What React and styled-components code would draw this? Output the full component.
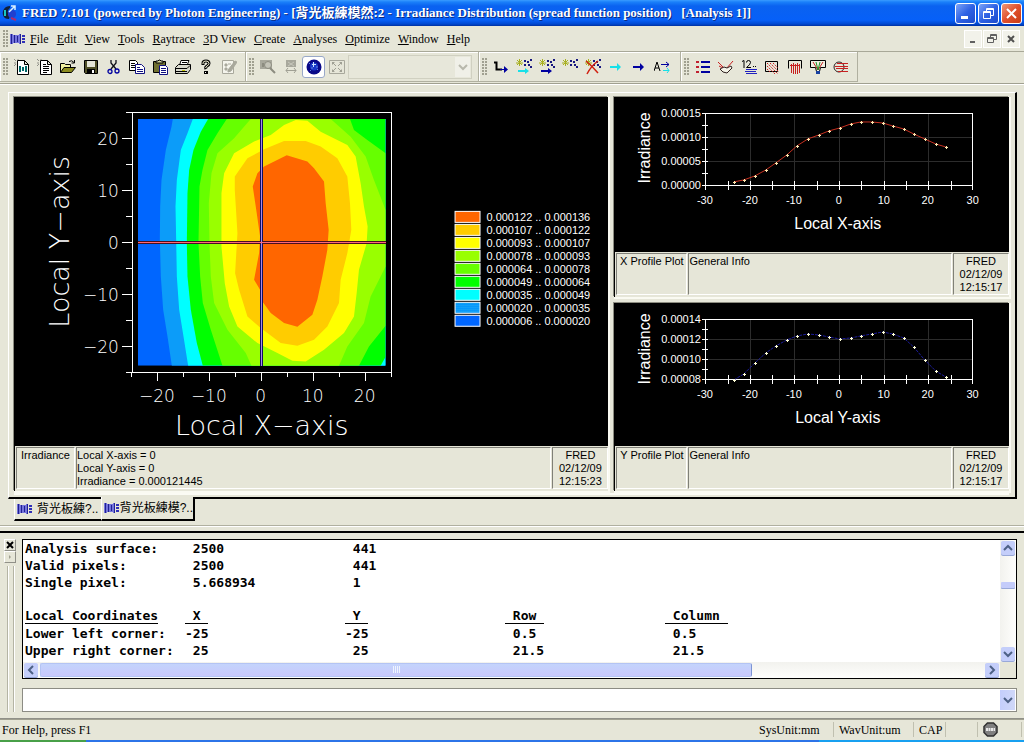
import React, { useState } from "react";
import styled, { createGlobalStyle, css } from "styled-components";

const GlobalStyle = createGlobalStyle`
  * {
    box-sizing: border-box;
  }
  body {
    margin: 0;
    background: #e6e6d8;
    color: #000;
    font: 12px/14px "Liberation Serif", "Noto Sans CJK TC", serif;
  }
  button, input, select {
    font: inherit;
    color: inherit;
  }
`;

const Window = styled.div`
  min-height: 100vh;
  display: flex;
  flex-direction: column;
`;

const TitleBar = styled.header`
  height: 26px;
  padding: 0 2px;
  display: flex;
  align-items: center;
  gap: 3px;
  color: #fff;
  background: linear-gradient(#3a9cff 0, #1a80fa 2px, #0a62f0 6px, #0660f8 20px, #0048d0 24px, #0030a0);
`;

const Title = styled.h1`
  flex: 1;
  margin: 0;
  font-size: 13px;
  line-height: 16px;
  font-weight: bold;
  white-space: pre;
  text-shadow: 1px 1px 0 #0a2a80;
`;

const WindowButtons = styled.div`
  display: flex;
  gap: 2px;
`;

const WindowButton = styled.button`
  width: 21px;
  height: 21px;
  padding: 0;
  border: 1px solid #fff;
  border-radius: 3px;
  display: grid;
  place-items: center;
  background: ${({ $close }) =>
    $close
      ? "linear-gradient(135deg, #f09878, #e0502c 50%, #c83c14)"
      : "linear-gradient(135deg, #7ca4f8, #2f62e4 50%, #1c4ccc)"};
`;

const MenuBar = styled.nav`
  height: 26px;
  display: flex;
  align-items: center;
  border-bottom: 1px solid #a8a898;
`;

const Grip = styled.span`
  width: 6px;
  height: 18px;
  margin: 0 1px 0 3px;
  background: radial-gradient(circle at 1px 1px, #a0a090 1px, transparent 1px) 0 0 / 3px 3px;
`;

const MenuItem = styled.button`
  padding: 0 4px;
  border: 0;
  background: none;
  line-height: 16px;
  white-space: nowrap;
  &:hover {
    background: #c1d2ee;
  }
`;

const ChildButtons = styled.div`
  display: flex;
  margin-left: auto;
  margin-right: 4px;
`;

const ChildButton = styled.button`
  width: 18px;
  height: 18px;
  margin-left: 1px;
  padding: 0;
  border: 1px solid #fff;
  background: #f2f2ea;
  display: grid;
  place-items: center;
`;

const ToolbarRow = styled.div`
  height: 32px;
  display: flex;
  border-bottom: 1px solid #a0a090;
  box-shadow: 0 1px 0 #fff;
`;

const Toolbar = styled.div`
  height: 30px;
  padding-right: ${({ $end }) => $end}px;
  display: flex;
  align-items: center;
  border: 1px solid #b0b0a0;
  border-width: 0 1px 1px 0;
  box-shadow: inset 1px 1px 0 #fff;
`;

const ToolButton = styled.button`
  width: 23px;
  height: 22px;
  padding: 0;
  border: 1px solid transparent;
  border-radius: 3px;
  background: none;
  display: grid;
  place-items: center;
  ${({ $active }) =>
    $active &&
    css`
      border-color: #98a8c8;
      background: #fff;
    `}
`;

const SelectWrap = styled.span`
  display: flex;
  position: relative;
`;

const Select = styled.select`
  width: ${({ $small }) => ($small ? "124px" : "100%")};
  height: 24px;
  padding: 0 4px;
  appearance: none;
  border: 1px solid ${({ $small }) => ($small ? "#c8c8b8" : "#8c8c84")};
  border-radius: 0;
  background: ${({ $small }) => ($small ? "#e8e8dc" : "#fff")};
  outline: 0;
`;

const SelectArrow = styled.span`
  position: absolute;
  top: 2px;
  right: 2px;
  width: 15px;
  height: 20px;
  display: grid;
  place-items: center;
  pointer-events: none;
  color: ${({ $small }) => ($small ? "#b8b8ac" : "#4d6185")};
  background: ${({ $small }) => ($small ? "#f0f0e8" : "linear-gradient(90deg, #c4cefc, #d0d8f8)")};
`;

const Workspace = styled.main`
  padding: 8px 7px 0 8px;
  border-bottom: 1px solid #b0b0a0;
  flex: none;
`;

const Splitter = styled.div`
  height: 7px;
  border-top: 1px solid #fff;
  border-bottom: 2px solid #000;
`;

const ViewFrame = styled.section`
  padding: 4px 6px 2px 5px;
  border: 2px solid;
  border-width: 1px 2px 2px 1px;
  border-color: #fff #000 #000 #fff;
`;

const Views = styled.div`
  display: grid;
  grid-template-columns: 595fr 395fr;
  gap: 6px;
  padding-bottom: 2px;
  border-bottom: 2px solid #fbfbf4;
`;

const ViewColumn = styled.div`
  display: flex;
  flex-direction: column;
  justify-content: space-between;
`;

const View = styled.article`
  border-left: 1px solid #000;
  background: #e6e6d8;
  box-shadow: 1px 1px 0 1px #fafaf2, -1px -1px 0 #8c8c80;
`;

const Plot = styled.svg`
  display: block;
  width: 100%;
  height: auto;
  background: #000;
  font-family: "Liberation Sans", Arial, sans-serif;
`;

const InfoRow = styled.dl`
  margin: 0;
  min-height: 45px;
  padding: 1px 0 2px 1px;
  display: flex;
  gap: 1px;
  font: 11px/13px "Liberation Sans", Arial, sans-serif;
`;

const InfoName = styled.dt`
  width: ${({ $wide }) => ($wide ? 71 : 59)}px;
  padding-top: 1px;
  text-align: center;
  white-space: nowrap;
  border: 1px solid;
  border-color: #808078 #fff #fff #808078;
`;

const InfoText = styled.dd`
  flex: ${({ $stamp }) => ($stamp ? "0 0 56px" : "1")};
  margin: 0;
  padding-top: 1px;
  text-align: ${({ $stamp }) => ($stamp ? "center" : "left")};
  border: 1px solid;
  border-color: #808078 #fff #fff #808078;
`;

const TabStrip = styled.div`
  display: flex;
  padding-left: 6px;
  height: 26px;
`;

const Tab = styled.button`
  height: ${({ $active }) => ($active ? 24 : 22)}px;
  width: ${({ $active }) => ($active ? 94 : 87)}px;
  margin-top: ${({ $active }) => ($active ? -2 : 0)}px;
  padding: 0 0 0 2px;
  display: flex;
  align-items: center;
  gap: ${({ $active }) => ($active ? 0 : 4)}px;
  white-space: nowrap;
  font-family: "Liberation Sans", "Noto Sans CJK TC", sans-serif;
  background: #e6e6d8;
  border: solid #000;
  border-width: 0 ${({ $active }) => ($active ? 2 : 0)}px 2px 0;
  border-left: 1px solid #fff;
`;

const Dock = styled.section`
  flex: 1;
  display: flex;
  padding: 6px 7px 6px 4px;
  border-bottom: 1px solid #909088;
`;

const DockHandle = styled.div`
  width: 18px;
  display: flex;
  flex-direction: column;
`;

const TinyButton = styled.button`
  width: 12px;
  height: 12px;
  padding: 0;
  display: grid;
  place-items: center;
  background: #e6e6d8;
  border: 1px solid;
  border-color: #fff #909088 #909088 #fff;
`;

const HandleBars = styled.span`
  flex: 1;
  width: 7px;
  margin: 3px 0 0 3px;
  border: solid #b4b4a4;
  border-width: 0 1px;
  box-shadow: inset 1px 0 0 #fff, 1px 0 0 #fff;
`;

const DockBody = styled.div`
  flex: 1;
  display: flex;
  flex-direction: column;
  gap: 9px;
`;

const Console = styled.div`
  flex: 1;
  display: grid;
  grid-template-columns: 1fr 16px;
  grid-template-rows: 1fr 16px;
  background: #fff;
  border: 1px solid #000;
`;

const Report = styled.table`
  table-layout: fixed;
  width: 800px;
  margin: 0 0 3px 2px;
  align-self: start;
  border-spacing: 0;
  font: bold 13px/17px "DejaVu Sans Mono", "Liberation Mono", monospace;
  white-space: pre;
  td, th {
    padding: 0;
    height: 17px;
    text-align: left;
  }
  th span {
    display: inline-block;
    border-bottom: 1px solid #000;
    line-height: 15px;
    vertical-align: top;
  }
`;

const VScroll = styled.div`
  display: flex;
  flex-direction: column;
  justify-content: space-between;
  align-items: center;
  padding: 1px 0;
  background: linear-gradient(90deg, #f2f2ee, #fefefc);
`;

const HScroll = styled.div`
  display: flex;
  align-items: stretch;
  padding: 1px;
  gap: 2px;
  background: linear-gradient(#f2f2ee, #fefefc);
`;

const ScrollButton = styled.button`
  width: 14px;
  height: 14px;
  padding: 0;
  display: grid;
  place-items: center;
  color: #4d6185;
  border: 0;
  border-radius: 2px;
  background: #c4cefa;
  box-shadow: 0 1px 0 #98a8d8;
`;

const ScrollCorner = styled.span`
  background: #e6e6d8;
`;

const HThumb = styled.span`
  flex: 0 1 73%;
  display: grid;
  place-items: center;
  border: 1px solid #b4c4f4;
  border-right-color: #7c94d4;
  border-radius: 2px;
  background: linear-gradient(#c4d4fc, #c8c8fc);
`;

const VThumb = styled.span`
  width: 14px;
  height: 6px;
  margin-bottom: 32px;
  border-radius: 1px;
  background: #c4ccfa;
  box-shadow: 0 1px 0 #98a8d8;
`;

const Spacer = styled.span`
  flex: 1;
`;

const StatusBar = styled.footer`
  height: 21px;
  display: flex;
  align-items: center;
  padding: 0 2px;
  border-top: 1px solid #a0a090;
`;

const StatusCell = styled.span`
  width: ${({ $width }) => $width}px;
  height: 15px;
  padding-left: 5px;
  display: flex;
  align-items: center;
  border-right: 1px solid #c0c0b0;
`;

const Taskbar = styled.div`
  height: 3px;
  background: linear-gradient(90deg, #48a048 0 86px, #2c74e8 86px 80%, #18a0f0 80%);
`;

const Chevron = ({ dir = "down" }) => {
  const paths = {
    down: "M1 3 5 7 9 3",
    up: "M1 7 5 3 9 7",
    left: "M7 1 3 5 7 9",
    right: "M3 1 7 5 3 9",
  };
  return (
    <svg width="10" height="10" viewBox="0 0 10 10" fill="none" stroke="currentColor" strokeWidth="2">
      <path d={paths[dir]} />
    </svg>
  );
};

const LensIcon = () => (
  <svg width="16" height="14" viewBox="0 0 16 14" shapeRendering="crispEdges">
    <path d="M0 2h3v1h6v-1h2v10h-2v-1h-6v1h-3z" fill="#7474dc" />
    <path d="M1.500 2v10M4.500 3v8M7.500 4v6M10.500 2v10" stroke="#202090" />
    <path d="M12 3h3v2h-3zM12 6h3v2h-3zM12 9h3v2h-3z" fill="#3030b8" />
  </svg>
);

const AppIcon = () => (
  <svg width="17" height="18" viewBox="0 0 17 18">
    <path d="M8 2C3 2 0 6 1 11c1 3 3 4 6 4l1-3c-3-2-3-6 0-8z" fill="#102038" />
    <path d="M3 6v6" stroke="#18c8c0" strokeWidth="2" />
    <circle cx="10" cy="10" r="4" fill="#2040d0" />
    <path d="M7 8 13 2M9 2h4v4" fill="none" stroke="#d8f0ff" strokeWidth="1.500" />
    <path d="m9 14 5 2" stroke="#b02870" strokeWidth="2" />
  </svg>
);

const page = <path d="M3.500 1.500h7l4 4v10h-11zM10.500 1.500v4h4" fill="#fff" stroke="#000" />;
const spark = <path d="M0 0l2 2M4 0v1M0 4h2M0 7l2-2" stroke="#909088" fill="none" />;
const burst = (
  <>
    <path d="M0 4h7M1 1l5 5M6 1 1 6M3.500 0v7" stroke="#a8b020" fill="none" />
    <path d="M8 1h2v2h-2zM11 2h2v2h-2zM14 0h2v2h-2zM8 5h2v2h-2zM12 5h2v2h-2zM14 7h2v2h-2z" fill="#181880" />
  </>
);
const cyan = "#18e0e8";
const navy = "#0000a0";

const icons = {
  "New FRED file": (
    <>
      {page}
      {spark}
      <path d="M5 7h2v6H5zM8 8h2v4H8zM11 7h2v6h-2z" fill="#006868" />
    </>
  ),
  "New script": (
    <>
      {page}
      {spark}
      <path d="M6 5.500h3M6 7.500h6M6 9.500h6M6 11.500h6M6 13.500h4" stroke="#000" />
    </>
  ),
  Open: (
    <>
      <path d="M.5 13.500v-9h4l1 1h5v3" fill="#f0f0a0" stroke="#000" />
      <path d="M.5 13.500 4 8.500h11.500l-4 5z" fill="#8c8c20" stroke="#000" />
      <path d="M9 2.500q3-2 5 1M14.500 1v3h-3" fill="none" stroke="#000" />
    </>
  ),
  Save: (
    <>
      <path d="M1.500 1.500h13v13h-12l-1-1z" fill="#505028" stroke="#000" />
      <path d="M4 2h8v6H4z" fill="#e6e6d8" />
      <path d="M4 10h8v5H4z" fill="#000" />
      <path d="M9 11h2v3H9z" fill="#fff" />
    </>
  ),
  Cut: (
    <>
      <path d="M5 1v3l5 6M10 1v3l-5 6" fill="none" stroke="#101018" strokeWidth="1.300" />
      <circle cx="4" cy="12.500" r="2" fill="none" stroke={navy} strokeWidth="1.300" />
      <circle cx="11" cy="12" r="2" fill="none" stroke={navy} strokeWidth="1.300" />
    </>
  ),
  Copy: (
    <>
      <path d="M.5 1.500h6l2 2v8h-8z" fill="#fff" stroke="#000" />
      <path d="M2 4.500h4M2 6.500h5M2 8.500h5" stroke="#000" />
      <path d="M6.500 5.500h6l3 3v6h-9z" fill="#fff" stroke="#101080" />
      <path d="M8 8.500h3M8 10.500h6M8 12.500h6" stroke="#101080" />
    </>
  ),
  Paste: (
    <>
      <path d="M1.500 2.500h12v11h-12z" fill="#707030" stroke="#000" />
      <path d="M4 4V2h2l1-1h1l1 1h2v2z" fill="#d8d8a0" stroke="#000" />
      <path d="M7.500 6.500h6l2 2v7h-8z" fill="#fff" stroke="#101080" />
      <path d="M9 9.500h5M9 11.500h5M9 13.500h5" stroke="#101080" />
    </>
  ),
  Print: (
    <>
      <path d="M4.500 6.500 6 1.500h8l-2 5" fill="#fff" stroke="#000" />
      <path d="M.5 8.500l3-3h12v5l-3 4h-12z" fill="#d8d8cc" stroke="#000" />
      <path d="M1 9.500h11l3-3M7 3.500h5M6 5.500h5M1 12.500h11" stroke="#000" fill="none" />
      <path d="M7 11h3v1H7z" fill="#c0c000" />
    </>
  ),
  Help: (
    <>
      <path d="M5 6V4q0-2 3-2t3 2.500q0 1.500-2 2.500T8 10" fill="none" stroke="#000" strokeWidth="3" />
      <path d="M5 5V4q0-2 3-2t3 2.500q0 1.500-2 2.500T8 9" fill="none" stroke="#f0f0d0" />
      <path d="M6 12h4v3H6z" fill="#000" />
      <path d="M7 13h1v1H7z" fill="#fff" />
    </>
  ),
  Properties: (
    <>
      <path d="M1.500 1.500h11v13h-11z" fill="#f4f4ec" stroke="#a8a89c" />
      <path d="M4 5h2v2H4zM4 9h2v2H4zM7 5h3M7 11l7-9 2 1-6 9-3 1z" fill="#a8a89c" stroke="#a8a89c" />
    </>
  ),
  Zoom: (
    <>
      <path d="M0 1h12v9H0z" fill="#a8a89c" />
      <circle cx="8" cy="6" r="3.500" fill="#c4c4b8" stroke="#8c8c80" />
      <path d="M3 4v4M10 9l5 5" stroke="#8c8c80" strokeWidth="2" />
    </>
  ),
  "Zoom extents": (
    <>
      <path d="M3 1h10v7H3z" fill="#a8a89c" />
      <path d="M5 3l6 4M11 3 5 7" stroke="#c8c8bc" />
      <path d="M3 11.500h10M5 9l-2 2.500L5 14M11 9l2 2.500-2 2.500" stroke="#a0a094" fill="none" />
    </>
  ),
  Sphere: (
    <>
      <circle cx="8" cy="8" r="7.500" fill="#080888" />
      <circle cx="8" cy="7.500" r="4" fill="#1838c8" />
      <path d="M7 3h1v2h2v1H8v2H7V6H6V5h1z" fill="#c8e0ff" />
      <path d="M3 5l1-1M11 11l1-1M5 12l-1-1M10 8h2M5 9h2" stroke="#6080e0" />
    </>
  ),
  Fit: (
    <>
      <path d="M.5 1.500h15v13H.5z" fill="none" stroke="#a8a89c" />
      <path d="M3 3h3L3 6zM13 3v3l-3-3zM3 13v-3l3 3zM13 13h-3l3-3z" fill="#a0a094" />
      <path d="M3 3l4 4M13 3 9 7M3 13l4-4M13 13 9 9" stroke="#a0a094" />
    </>
  ),
  "Trace one": (
    <>
      <path d="M1 3.500h2.500v7H9" fill="none" stroke="#000" strokeWidth="2" />
      <path d="M7 10h5v1H7zM11 7l4 3.500-4 3.500z" fill={navy} />
    </>
  ),
  "Trace and render": (
    <>
      {burst}
      <path d="M2 11h7v2H2zM9 9l4 3-4 3z" fill={cyan} />
    </>
  ),
  "Trace all": (
    <>
      {burst}
      <path d="M2 11h7v2H2zM9 9l4 3-4 3z" fill={navy} />
    </>
  ),
  "Create rays": burst,
  "Delete rays": (
    <>
      {burst}
      <path d="M1 2q6 5 12 12M13 2Q6 7 2 15" fill="none" stroke="#d02010" strokeWidth="1.500" />
    </>
  ),
  "Trace existing": <path d="M2 7h7v2H2zM9 4l4 4-4 4z" fill={cyan} />,
  "Render existing": <path d="M2 7h7v2H2zM9 4l4 4-4 4z" fill={navy} />,
  "Advanced trace": (
    <>
      <path d="M0 12 3 3l3 9M1 9h4" fill="none" stroke="#000" />
      <path d="M7 5.500h8M12 3l3 2.500L12 8" fill="none" stroke={navy} />
      <path d="M9 11.500h6M13 9l2 2.500-2 2.500" fill="none" stroke={cyan} />
    </>
  ),
  "Detailed report": (
    <>
      <path d="M1 2h3v2H1zM1 7h3v2H1zM1 12h3v2H1z" fill="#c02030" />
      <path d="M6 2h9v2H6zM6 7h9v2H6zM6 12h9v2H6z" fill={navy} />
    </>
  ),
  "Ray summary": (
    <>
      <path d="M0 3l7 7M15 2 8 10M1 7l6 3" fill="none" stroke="#c82020" />
      <path d="M2 10l4-2 3 1 4-2 1 2-5 5-4-1z" fill="#f4f4e8" stroke="#302020" />
    </>
  ),
  "Ray count": (
    <>
      <path d="M1 2.500l2-1V9M5.500 3.500q0-2 2-2t2 2q0 2-4 5h4.500M12 7.500h1M14 7.500h1" fill="none" stroke="#000" />
      <path d="M5 10.500h11M4 12.500h11M5 14.500h11" stroke="#2020c0" />
    </>
  ),
  "Spot diagram": (
    <>
      <path d="M1.500 2.500h12v10h-12z" fill="none" stroke="#000" />
      <path d="M3 4l11 11M6 4l9 9M3 7l8 8M9 4l5 5M3 10l3 3" stroke="#d02020" strokeDasharray="1.500 1" />
    </>
  ),
  Irradiance: (
    <>
      <path d="M1.500 9.500v-8h13v8" fill="none" stroke="#000" />
      <path d="M3 6.500h10M4.500 5v9M6.500 4v11M8.500 5v10M10.500 4v11M12.500 5v9" stroke="#c82020" />
    </>
  ),
  Intensity: (
    <>
      <path d="M.5 8.500v-7h15v7h-5l-1 4h-3l-1-4z" fill="#f0f0e4" stroke="#000" />
      <path d="M3 3l5 8M13 3l-5 8" stroke="#c82020" />
      <path d="M6 3l2 8 2-8" fill="none" stroke="#209020" />
      <path d="M6 12h4v3H6z" fill="#1840a0" />
    </>
  ),
  Wavefront: (
    <>
      <circle cx="6" cy="8" r="5" fill="none" stroke="#302020" />
      <path d="M4 4.500h11M2 7.500h13M3 9.500h12M5 12.500h10" stroke="#c82020" />
    </>
  ),
};

const ToolIcon = ({ name }) => (
  <svg width="16" height="16" viewBox="0 0 16 16">
    {icons[name]}
  </svg>
);

const fileTools = ["New FRED file", "New script", "Open", "Save", "Cut", "Copy", "Paste", "Print", "Help", "Properties"];
const viewTools = ["Zoom", "Zoom extents", "Sphere", "Fit"];
const traceTools = [
  "Trace one",
  "Trace and render",
  "Trace all",
  "Create rays",
  "Delete rays",
  "Trace existing",
  "Render existing",
  "Advanced trace",
];
const analysisTools = [
  "Detailed report",
  "Ray summary",
  "Ray count",
  "Spot diagram",
  "Irradiance",
  "Intensity",
  "Wavefront",
];

const menus = [
  "File",
  "Edit",
  "View",
  "Tools",
  "Raytrace",
  "3D View",
  "Create",
  "Analyses",
  "Optimize",
  "Window",
  "Help",
];

const Tools = ({ names, active }) =>
  names.map((name) => (
    <ToolButton key={name} type="button" aria-label={name} $active={name === active}>
      <ToolIcon name={name} />
    </ToolButton>
  ));

// contour levels, lowest first; each shape covers the one before it
const contours = [
  ["url(#dither)", "105,0 101,23 84,93 71,183 67,263 66,363 69,473 76,573 89,653 102,741 744,741 744,0"],
  ["#00ffff", "165,0 149,43 129,93 117,183 113,263 115,363 117,473 124,573 137,653 151,741 744,741 744,0"],
  ["#00ff00", "211,0 189,38 167,93 154,153 149,223 147,373 149,473 159,573 177,673 195,741 729,741 744,714 744,0"],
  [
    "#66ff00",
    "267,0 239,43 209,93 194,153 185,203 182,373 187,473 195,553 219,633 254,741 664,741 694,683 744,621 744,103 689,63 649,33 637,0",
  ],
  [
    "#99ff00",
    "339,0 289,58 239,103 221,163 213,253 215,373 219,473 229,553 269,633 324,703 341,741 604,741 629,683 679,613 699,533 744,443 744,273 709,183 684,113 639,53 579,0",
  ],
  [
    "#ffff00",
    "474,3 509,5 549,38 629,78 654,113 669,193 679,263 690,323 687,373 664,453 657,523 649,593 619,643 559,693 504,728 464,726 419,703 359,673 299,623 274,563 261,493 251,383 251,223 259,163 289,103 349,68 399,48 439,18",
  ],
  [
    "#ffcc00",
    "439,66 504,66 549,83 599,118 629,173 637,253 641,333 629,403 609,483 604,553 569,623 529,663 479,681 429,673 369,628 329,593 304,513 292,463 299,343 291,213 291,173 329,118 379,91",
  ],
  [
    "#ff6600",
    "447,109 509,128 529,148 559,188 564,253 573,333 569,393 554,473 539,543 524,588 479,624 439,613 399,583 374,548 367,513 349,483 364,403 367,353 354,263 345,203 359,163 379,143",
  ],
];

const legend = [
  ["#ff6600", "0.000122 .. 0.000136"],
  ["#ffcc00", "0.000107 .. 0.000122"],
  ["#ffff00", "0.000093 .. 0.000107"],
  ["#99ff00", "0.000078 .. 0.000093"],
  ["#66ff00", "0.000064 .. 0.000078"],
  ["#00ff00", "0.000049 .. 0.000064"],
  ["#00ffff", "0.000035 .. 0.000049"],
  ["url(#dither)", "0.000020 .. 0.000035"],
  ["#0066ff", "0.000006 .. 0.000020"],
];

const majors = [-20, -10, 0, 10, 20];
const minors = [-25, -15, -5, 5, 15, 25];

const minus = (n) => String(n).replace("-", "−");

function ContourPlot() {
  const x = (v) => 247 + Math.round(v * 5.2);
  const y = (v) => 145 - Math.round(v * 5.2);
  return (
    <Plot viewBox="0 0 594 349" role="img" aria-label="Irradiance distribution">
      <defs>
        <pattern id="dither" width="2" height="2" patternUnits="userSpaceOnUse">
          <rect width="2" height="2" fill="#0094ff" />
          <rect width="1" height="1" fill="#30b4e8" />
        </pattern>
      </defs>
      <svg x="123" y="22" width="248" height="247" viewBox="0 0 744 741">
        <rect width="744" height="741" fill="#0066ff" />
        {contours.map(([fill, points]) => (
          <polygon key={fill} points={points} fill={fill} />
        ))}
      </svg>
      <g shapeRendering="crispEdges" fill="none">
        <path d="M246.500 22v247" stroke="#101060" strokeWidth="3" />
        <path d="M123 145.500h248" stroke="#481020" strokeWidth="3" />
        <path d="M246.500 22v247" stroke="#a888e8" />
        <path d="M123 145.500h248" stroke="#ff6878" />
        <rect x="117.500" y="15.500" width="259" height="260" stroke="#fff" />
        <path
          stroke="#fff"
          d={
            majors.map((v) => `M117 ${y(v) + 0.5}h-10M${x(v) - 0.5} 275v9`).join("") +
            minors.map((v) => `M117 ${y(v) + 0.5}h-6M${x(v) - 0.5} 275v5`).join("")
          }
        />
      </g>
      <g fill="#fff" fontFamily="DejaVu Sans" fontWeight="200" fontSize="17">
        {majors.map((v) => (
          <text key={v} x="104" y={y(v) + 7} textAnchor="end">
            {minus(v)}
          </text>
        ))}
        {majors.map((v) => (
          <text key={v} x={x(v) - 1} y="305" textAnchor="middle">
            {minus(v)}
          </text>
        ))}
        <text x="247" y="338" textAnchor="middle" fontSize="27">
          Local X−axis
        </text>
        <text transform="translate(54 145) rotate(-90)" textAnchor="middle" fontSize="27">
          Local Y−axis
        </text>
      </g>
      {legend.map(([fill, label], i) => (
        <g key={label}>
          <rect x="440.500" y={114.5 + i * 13} width="25" height="11" fill={fill} stroke="#fff" />
          <text x="472" y={124 + i * 13} fill="#fff" fontSize="11">
            {label}
          </text>
        </g>
      ))}
    </Plot>
  );
}

const sampleX = [119, 129, 140, 151, 161, 172, 182, 193, 204, 214, 225, 236, 246, 257, 268, 278, 289, 299, 310, 321, 331];

const profiles = [
  {
    axis: "X",
    height: 155,
    bottom: 88,
    stroke: "#c83020",
    dot: "#ffe8b0",
    ticks: [["0.00015", 16], ["0.00010", 40], ["0.00005", 64], ["0.00000", 88]],
    values: [85, 83, 79, 73, 66, 58, 49, 42, 38, 34, 31, 27, 25, 25, 26, 29, 32, 37, 42, 47, 50],
  },
  {
    axis: "Y",
    height: 143,
    bottom: 76,
    stroke: "#1c1c9c",
    dot: "#ffffd8",
    ticks: [["0.00014", 16], ["0.00012", 36], ["0.00010", 56], ["0.00008", 76]],
    values: [77, 71, 60, 50, 43, 37, 33, 31, 32, 34, 36, 35, 33, 31, 29, 31, 35, 44, 57, 68, 74],
  },
];

function ProfilePlot({ axis, height, bottom, stroke, dot, ticks, values }) {
  const step = ticks[1][1] - ticks[0][1];
  const x = (v) => 224 + Math.round(v * 4.46);
  const line = values.map((v, i) => `${sampleX[i]},${v}`).join(" ");
  return (
    <Plot viewBox={`0 0 394 ${height}`} role="img" aria-label={`${axis} profile`}>
      <g shapeRendering="crispEdges" fill="none">
        <path
          stroke="#2c2c2c"
          d={
            majors.map((v) => `M${x(v) + 0.5} 16V${bottom}`).join("") +
            ticks.slice(1, -1).map((t) => `M90 ${t[1] + 0.5}h268`).join("")
          }
        />
        <path
          stroke="#fff"
          d={
            `M90.500 16.500h267V${bottom + 0.5}h-267z` +
            ticks.map((t) => `M87 ${t[1] + 0.5}h6`).join("") +
            ticks.slice(0, -1).map((t) => `M87 ${t[1] + step / 2 + 0.5}h6`).join("") +
            [...majors, ...minors].map((v) => `M${x(v) + 0.5} ${bottom - 4}v9`).join("") +
            `M90.500 ${bottom}v5M357.500 ${bottom}v5`
          }
        />
      </g>
      <polyline points={line} fill="none" stroke={stroke} strokeDasharray={axis === "Y" ? "3 1" : undefined} />
      {values.map((v, i) => (
        <path
          key={sampleX[i]}
          d={`M${sampleX[i] - 1} ${v + 0.5}h3M${sampleX[i] + 0.5} ${v - 1}v3`}
          stroke={dot}
          shapeRendering="crispEdges"
        />
      ))}
      <g fill="#fff" fontSize="11">
        {ticks.map(([label, y]) => (
          <text key={label} x="86" y={y + 4} textAnchor="end">
            {label}
          </text>
        ))}
        {[-30, ...majors, 30].map((v) => (
          <text key={v} x={x(v)} y={bottom + 19} textAnchor="middle">
            {v}
          </text>
        ))}
        <text x="223" y={bottom + 44} textAnchor="middle" fontSize="16">
          Local {axis}-axis
        </text>
        <text
          transform={`translate(35 ${axis === "X" ? 51 : 46}) rotate(-90)`}
          textAnchor="middle"
          fontSize="16"
        >
          Irradiance
        </text>
      </g>
    </Plot>
  );
}

const Info = ({ name, wide, lines, time }) => (
  <InfoRow>
    <InfoName $wide={wide}>{name}</InfoName>
    <InfoText>
      {lines.map((line) => (
        <div key={line}>{line}</div>
      ))}
    </InfoText>
    <InfoText $stamp>
      FRED
      <br />
      02/12/09
      <br />
      {time}
    </InfoText>
  </InfoRow>
);

const rows = [
  ["Analysis surface:", " 2500", " 441", "", ""],
  ["Valid pixels:", " 2500", " 441", "", ""],
  ["Single pixel:", " 5.668934", " 1", "", ""],
  ["", "", "", "", ""],
];

const corners = [
  ["Lower left corner:", "-25", "-25", " 0.5", " 0.5"],
  ["Upper right corner:", " 25", " 25", " 21.5", " 21.5"],
];

const ReportRows = ({ data }) =>
  data.map((row, i) => (
    <tr key={i}>
      {row.map((cell, j) => (
        <td key={j}>{cell}</td>
      ))}
    </tr>
  ));

const tabs = ["背光板練?..", "背光板練模?.."];

export default function App() {
  const [tab, setTab] = useState(1);

  return (
    <>
      <GlobalStyle />
      <Window>
        <TitleBar>
          <AppIcon />
          <Title>
            {"FRED 7.101 (powered by Photon Engineering) - [背光板練模然:2 - Irradiance Distribution (spread function position)   [Analysis 1]]"}
          </Title>
          <WindowButtons>
            <WindowButton type="button" aria-label="Minimize">
              <svg width="13" height="13">
                <path d="M2 9h7v3H2z" fill="#fff" />
              </svg>
            </WindowButton>
            <WindowButton type="button" aria-label="Restore">
              <svg width="13" height="13" fill="none" stroke="#fff">
                <path d="M4.500 4V1.500h7v7H9M4 2.500h8" />
                <path d="M1.500 4.500h7v7h-7zM1 5.500h8" />
              </svg>
            </WindowButton>
            <WindowButton type="button" aria-label="Close" $close>
              <svg width="13" height="13">
                <path d="M2 2l9 9M11 2l-9 9" stroke="#fff" strokeWidth="2" />
              </svg>
            </WindowButton>
          </WindowButtons>
        </TitleBar>

        <MenuBar>
          <Grip />
          <LensIcon />
          {menus.map((name) => (
            <MenuItem key={name} type="button">
              <u>{name[0]}</u>
              {name.slice(1)}
            </MenuItem>
          ))}
          <ChildButtons>
            <ChildButton type="button" aria-label="Minimize document">
              <svg width="10" height="10">
                <path d="M2 7h5v2H2z" fill="#606060" />
              </svg>
            </ChildButton>
            <ChildButton type="button" aria-label="Restore document">
              <svg width="10" height="10" fill="none" stroke="#606060">
                <path d="M3.500 3V.5h6v5H7M3 1.500h7M.5 3.500h6v5h-6zM0 4.500h7" />
              </svg>
            </ChildButton>
            <ChildButton type="button" aria-label="Close document">
              <svg width="10" height="10">
                <path d="M2 2l6 6M8 2 2 8" stroke="#505050" strokeWidth="2" />
              </svg>
            </ChildButton>
          </ChildButtons>
        </MenuBar>

        <ToolbarRow>
          <Toolbar $end={5}>
            <Grip />
            <Tools names={fileTools} />
          </Toolbar>
          <Toolbar $end={6}>
            <Grip />
            <Tools names={viewTools} active="Sphere" />
            <SelectWrap>
              <Select $small aria-label="View name" disabled />
              <SelectArrow $small>
                <Chevron />
              </SelectArrow>
            </SelectWrap>
          </Toolbar>
          <Toolbar $end={7}>
            <Grip />
            <Tools names={traceTools} />
          </Toolbar>
          <Toolbar $end={5}>
            <Grip />
            <Tools names={analysisTools} />
          </Toolbar>
        </ToolbarRow>

        <Workspace>
          <ViewFrame>
            <Views>
              <View>
                <ContourPlot />
                <Info
                  name="Irradiance"
                  lines={["Local X-axis = 0", "Local Y-axis = 0", "Irradiance = 0.000121445"]}
                  time="12:15:23"
                />
              </View>
              <ViewColumn>
                {profiles.map((profile) => (
                  <View key={profile.axis}>
                    <ProfilePlot {...profile} />
                    <Info wide name={`${profile.axis} Profile Plot`} lines={["General Info"]} time="12:15:17" />
                  </View>
                ))}
              </ViewColumn>
            </Views>
          </ViewFrame>
          <TabStrip role="tablist">
            {tabs.map((label, i) => (
              <Tab
                key={label}
                type="button"
                role="tab"
                aria-selected={tab === i}
                $active={tab === i}
                onClick={() => setTab(i)}
              >
                <LensIcon />
                {label}
              </Tab>
            ))}
          </TabStrip>
        </Workspace>
        <Splitter />

        <Dock>
          <DockHandle>
            <TinyButton type="button" aria-label="Close output">
              <svg width="8" height="8">
                <path d="M1 1l6 6M7 1 1 7" stroke="#000" strokeWidth="2" />
              </svg>
            </TinyButton>
            <TinyButton type="button" aria-label="Expand output">
              <svg width="8" height="8">
                <path d="M3 2l2 2-2 2z" fill="#a0a090" />
              </svg>
            </TinyButton>
            <HandleBars />
          </DockHandle>
          <DockBody>
            <Console>
              <Report>
                <tbody>
                  <ReportRows data={rows} />
                  <tr>
                    {["Local Coordinates", " X ", " Y ", " Row ", " Column "].map((head) => (
                      <th key={head} scope="col">
                        <span>{head}</span>
                      </th>
                    ))}
                  </tr>
                  <ReportRows data={corners} />
                </tbody>
              </Report>
              <VScroll>
                <ScrollButton type="button" aria-label="Scroll up">
                  <Chevron dir="up" />
                </ScrollButton>
                <VThumb />
                <ScrollButton type="button" aria-label="Scroll down">
                  <Chevron />
                </ScrollButton>
              </VScroll>
              <HScroll>
                <ScrollButton type="button" aria-label="Scroll left">
                  <Chevron dir="left" />
                </ScrollButton>
                <HThumb>
                  <svg width="8" height="8">
                    <path d="M1.500 0v7M3.500 0v7M5.500 0v7M7.500 0v7" stroke="#eef4fe" />
                  </svg>
                </HThumb>
                <Spacer />
                <ScrollButton type="button" aria-label="Scroll right">
                  <Chevron dir="right" />
                </ScrollButton>
              </HScroll>
              <ScrollCorner />
            </Console>
            <SelectWrap>
              <Select aria-label="Command" />
              <SelectArrow>
                <Chevron />
              </SelectArrow>
            </SelectWrap>
          </DockBody>
        </Dock>

        <StatusBar>
          <span>For Help, press F1</span>
          <Spacer />
          <StatusCell $width={80}>SysUnit:mm</StatusCell>
          <StatusCell $width={80}>WavUnit:um</StatusCell>
          <StatusCell $width={32}>CAP</StatusCell>
          <StatusCell $width={32} />
          <StatusCell $width={44}>
            <svg width="15" height="15" viewBox="0 0 15 15">
              <path d="M4.500 1h6L14 4.500v6L10.500 14h-6L1 10.500v-6z" fill="#808080" stroke="#303030" strokeWidth="1.500" />
              <path d="M3 7.500h9" stroke="#e8e8e8" strokeWidth="3" strokeDasharray="2 .5" />
            </svg>
          </StatusCell>
        </StatusBar>
        <Taskbar />
      </Window>
    </>
  );
}
